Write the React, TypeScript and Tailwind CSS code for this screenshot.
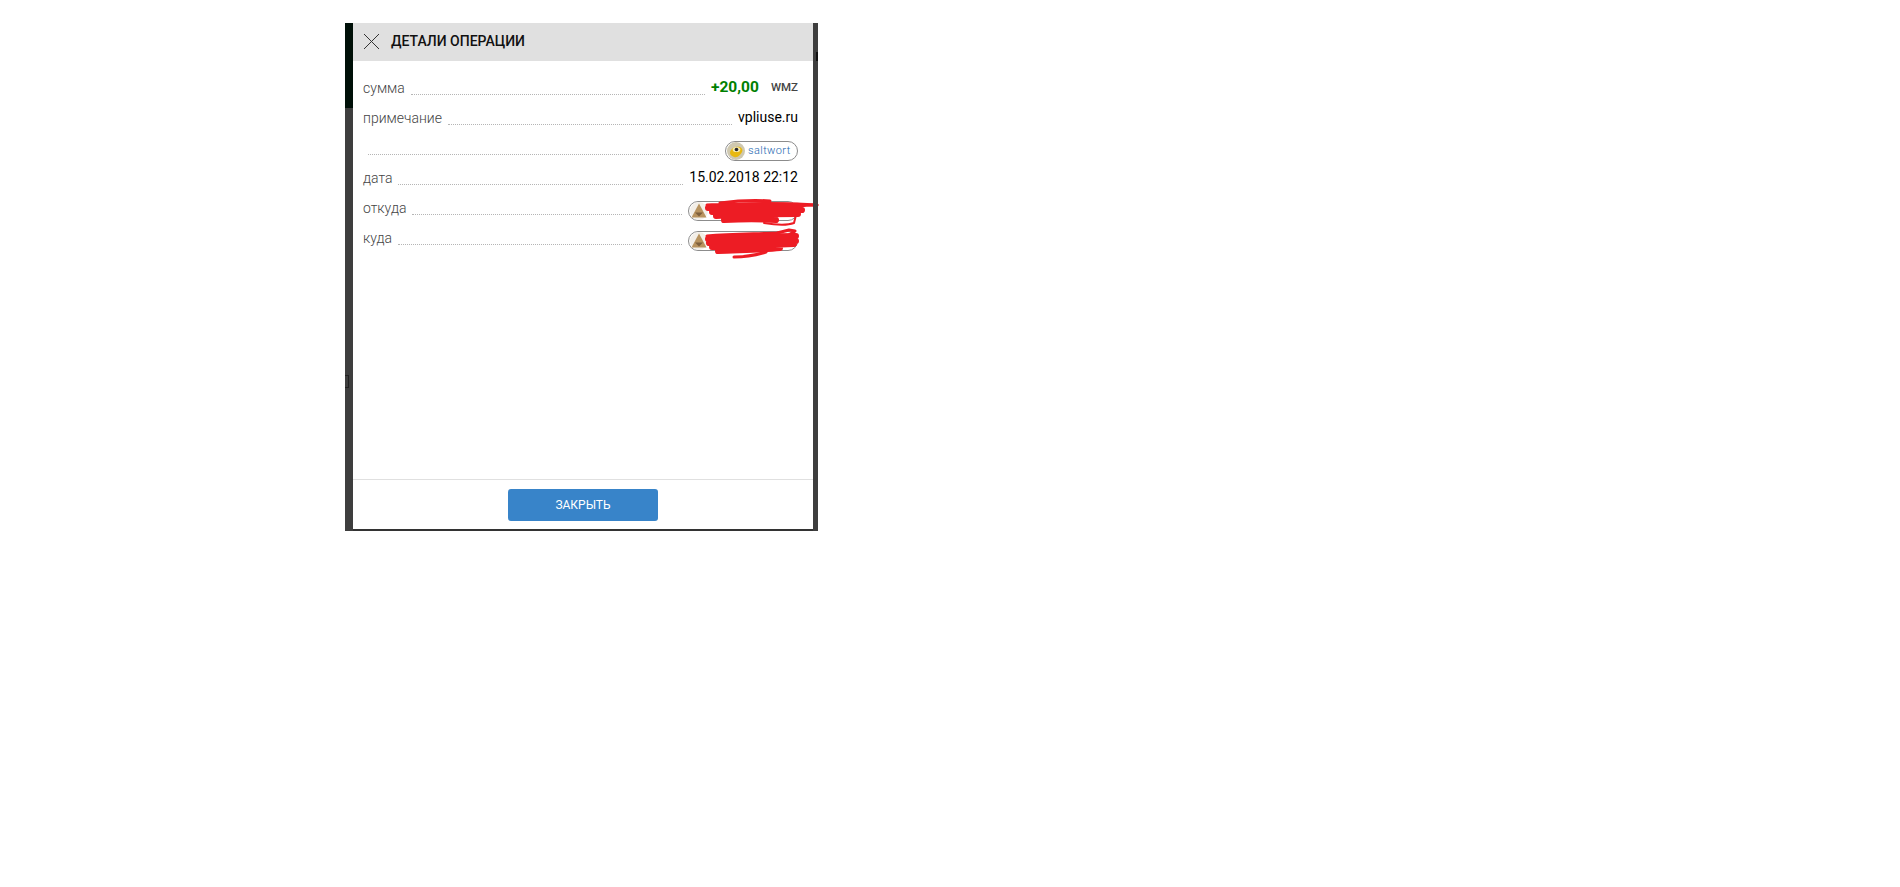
import React from "react";

const rowText = "text-[14px] leading-[20px]";

function Dots({ className = "" }: { className?: string }) {
  return <div className={`flex-1 border-b border-dotted border-[#b5b5b5] ${className}`} />;
}

function EyeAvatar() {
  return (
    <svg width="18" height="18" viewBox="0 0 18 18" className="shrink-0">
      <circle cx="9" cy="9" r="9" fill="#cfc8b0" />
      <path d="M3 11c0-4 5-7 10-6 2 1 3 3 2 5-2 3-4 6-8 5-2-1-4-2-4-4z" fill="#e8b80f" />
      <ellipse cx="9.5" cy="7.5" rx="3.8" ry="2.6" fill="#f4e9b0" />
      <circle cx="9.5" cy="7.5" r="1.8" fill="#26262e" />
    </svg>
  );
}

function PyramidAvatar() {
  return (
    <svg width="18" height="18" viewBox="0 0 18 18" className="shrink-0">
      <circle cx="9" cy="9" r="9" fill="#f3efe8" />
      <path d="M9 1.5 16.5 15.5H1.5z" fill="#b8935f" />
      <path d="M5 10.5h8L9 14.5z" fill="#7d5f3c" />
    </svg>
  );
}

function Pill({ children, className = "" }: { children: React.ReactNode; className?: string }) {
  return (
    <div className={`flex h-[20px] items-center rounded-full border border-[#8c8c8c] ${className}`}>
      {children}
    </div>
  );
}

function Row({ label, children }: { label?: string; children: React.ReactNode }) {
  return (
    <div className="flex h-[30px] items-end">
      {label && <span className={`${rowText} relative top-[2px] mb-[-1px] mr-[6px] font-light text-[#444]`}>{label}</span>}
      {children}
    </div>
  );
}

function RedactedPill({ variant }: { variant: 1 | 2 }) {
  return (
    <div className="relative mb-[-6px] ml-[6px]">
      <Pill className="w-[110px] pl-[1px]">
        <PyramidAvatar />
      </Pill>
      {/* scribble over the wallet name */}
      <svg width="135" height="34" viewBox="0 0 135 34" className="absolute left-0 top-[-7px] overflow-visible">
        {variant === 1 ? (
          <g fill="none" stroke="#ed1c24" strokeLinecap="round" strokeLinejoin="round">
            <path d="M32 9c15-2 35-3 50-2M19 11c25-1 60-1 90-1l20 1" strokeWidth="3" />
            <path d="M110 12c8-1 14-1 19-1" strokeWidth="3" />
            <path d="M20 14c30-3 64-4 92-2M24 18c28-3 60-4 90-2M28 22c25-2 54-2 82-2M36 26c20-1 36-1 52 0" strokeWidth="6" />
            <path d="M76 29c12 2 22 3 30 0l2-8" strokeWidth="2" />
          </g>
        ) : (
          <g fill="none" stroke="#ed1c24" strokeLinecap="round" strokeLinejoin="round">
            <path d="M19 12c25-2 50-2 70-3l12-3 6 1-6 4" strokeWidth="3" />
            <path d="M20 15c30-2 62-3 88-3M21 19c30-2 60-2 87-2M24 23c25-1 52-2 82-3M30 27c20-1 44-1 62-3" strokeWidth="6" />
            <path d="M46 33c12 0 22-2 32-5" strokeWidth="3" />
          </g>
        )}
      </svg>
    </div>
  );
}

export default function App() {
  return (
    <div className="min-h-[887px] bg-white pl-[345px] pt-[23px] [font-family:Roboto,sans-serif]">
      <div className="flex h-[508px] w-[473px]">
        <div className="relative flex w-[8px] flex-col bg-[#3e3e3e]">
          <div className="h-[85px] bg-[#001008]" />
          <div className="absolute left-0 top-[352px] h-[13px] w-[4px] border-y border-r border-[#222]" />
        </div>

        <div className="flex flex-1 flex-col border-b-2 border-[#333] bg-white">
          <div className="flex h-[38px] items-center bg-[#e0e0e0] pb-[1px] pl-[11px]">
            <svg width="15" height="15" viewBox="0 0 15 15" className="text-[#333]">
              <path d="M0 0l15 15M15 0 0 15" stroke="currentColor" strokeWidth="1" fill="none" />
            </svg>
            <h1 className="ml-[12px] text-[14px] font-medium text-[#111]">ДЕТАЛИ ОПЕРАЦИИ</h1>
          </div>

          <div className="flex-1 pl-[10px] pr-[15px] pt-[4px]">
            <Row label="сумма">
              <Dots />
              <span className="relative top-[1px] mb-[-1px] ml-[6px] text-[15.5px] font-bold leading-[20px] text-[#008000]">+20,00</span>
              <span className="relative top-[1px] mb-[-1px] ml-[12px] text-[11.5px] font-medium leading-[20px] text-[#444]">WMZ</span>
            </Row>
            <Row label="примечание">
              <Dots />
              <span className={`${rowText} relative top-[1px] mb-[-1px] ml-[6px] text-black`}>vpliuse.ru</span>
            </Row>
            <Row>
              <Dots className="ml-[5px]" />
              <Pill className="mb-[-6px] ml-[6px] w-[73px] pl-[1px]">
                <EyeAvatar />
                <span className="ml-[3px] text-[11px] font-light tracking-[0.4px] text-[#1a66b0]">saltwort</span>
              </Pill>
            </Row>
            <Row label="дата">
              <Dots />
              <span className={`${rowText} relative top-[1px] mb-[-1px] ml-[6px] text-black`}>15.02.2018 22:12</span>
            </Row>
            <Row label="откуда">
              <Dots />
              <RedactedPill variant={1} />
            </Row>
            <Row label="куда">
              <Dots />
              <RedactedPill variant={2} />
            </Row>
          </div>

          <div className="flex h-[50px] justify-center border-t border-[#e0e0e0] pt-[9px]">
            <button className="h-[32px] w-[150px] rounded-[3px] bg-[#3884c9] text-[12px] text-white">ЗАКРЫТЬ</button>
          </div>
        </div>

        <div className="relative w-[5px] bg-[#3e3e3e]">
          <div className="absolute right-0 top-[29px] h-[9px] w-[2px] bg-[#111]" />
        </div>
      </div>
    </div>
  );
}
